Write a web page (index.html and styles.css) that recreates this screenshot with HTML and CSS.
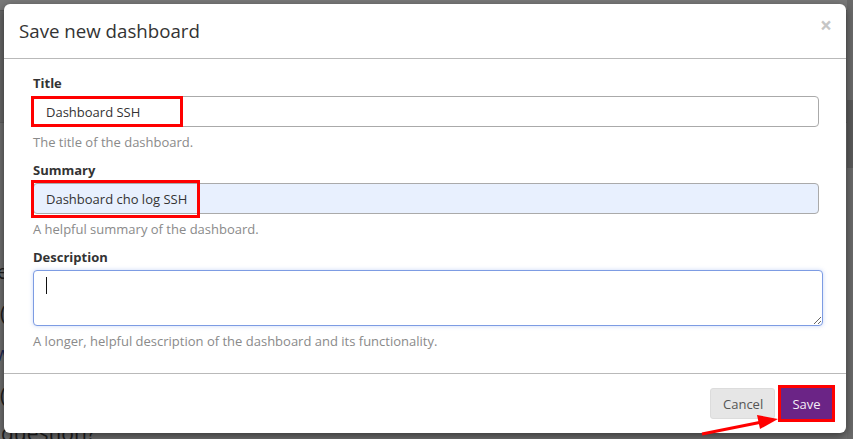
FILE: index.html
```html
<!DOCTYPE html>
<html>
<head>
<meta charset="utf-8">
<link rel="stylesheet" href="styles.css">
</head>
<body>
<div class="page">
  <div class="page-top"></div>
  <div class="page-band"></div>
  <div class="page-text">
    <p class="pline l1">e</p>
    <p class="pline l2">(</p>
    <p class="pline l3">w</p>
    <p class="pline l4">(</p>
    <p class="pline l5">question?</p>
  </div>
  <div class="scrollbar"><div class="thumb"></div></div>
</div>

<div class="modal">
  <div class="modal-header">
    <h4 class="modal-title">Save new dashboard</h4>
    <span class="close">&times;</span>
  </div>
  <div class="modal-body">
    <div class="form-group">
      <label class="label">Title</label>
      <div class="field">
        <input class="input" type="text" value="Dashboard SSH">
        <span class="mark mark-title"></span>
      </div>
      <p class="help">The title of the dashboard.</p>
    </div>
    <div class="form-group">
      <label class="label">Summary</label>
      <div class="field">
        <input class="input input-filled" type="text" value="Dashboard cho log SSH">
        <span class="mark mark-summary"></span>
      </div>
      <p class="help">A helpful summary of the dashboard.</p>
    </div>
    <div class="form-group">
      <label class="label">Description</label>
      <div class="field">
        <textarea class="textarea"></textarea>
        <span class="caret"></span>
      </div>
      <p class="help">A longer, helpful description of the dashboard and its functionality.</p>
    </div>
  </div>
  <div class="modal-footer">
    <button class="btn btn-cancel">Cancel</button>
    <span class="save-mark"><button class="btn btn-save">Save</button></span>
  </div>
</div>

<svg class="arrow" width="853" height="439" viewBox="0 0 853 439">
  <line x1="702" y1="434" x2="762" y2="422" stroke="#ff0000" stroke-width="3"/>
  <polygon points="778,419 757,415 760,429" fill="#ff0000"/>
</svg>
</body>
</html>
```

FILE: styles.css
```css
html, body {
  margin: 0;
  padding: 0;
  width: 853px;
  height: 439px;
  overflow: hidden;
}
body {
  background: #6f6f6f;
  font-family: "Open Sans", "Liberation Sans", sans-serif;
  position: relative;
}
.page {
  width: 853px;
  height: 439px;
}
.page-top {
  height: 10px;
  background: #797979;
  border-bottom: 1px solid #5a5a5a;
}
.page-band {
  height: 111px;
  background: #666666;
  border-bottom: 1px solid #5c5c5c;
}
.page-text {
  padding-top: 128px;
}
.pline {
  margin: 0;
  font-family: "Open Sans", sans-serif;
  font-size: 20px;
  line-height: 41px;
  color: #1e1e1e;
}
.l1 { margin-left: -3px; }
.l3 { color: #1d2a55; margin-left: -5px; }
.l5 { margin-left: 1px; font-size: 21px; line-height: 36px; }
.scrollbar {
  position: absolute;
  right: 0;
  top: 0;
  width: 6px;
  height: 439px;
  background: #6a6a6a;
}
.thumb {
  margin-top: 100px;
  height: 68px;
  background: #5a5a5a;
}

.modal {
  position: absolute;
  left: 4px;
  top: 4px;
  width: 842px;
  height: 429px;
  background: #ffffff;
  border-radius: 6px;
  box-shadow: 0 3px 9px rgba(0, 0, 0, 0.5);
  display: flex;
  flex-direction: column;
  color: #333333;
}
.modal-header {
  height: 55px;
  box-sizing: border-box;
  border-bottom: 1px solid #b9b9b9;
  display: flex;
  align-items: center;
  justify-content: space-between;
  padding: 0 14px 2px 15px;
}
.modal-title {
  margin: 0;
  font-size: 18.7px;
  font-weight: 400;
  color: #333333;
}
.close {
  font-size: 21px;
  font-weight: 700;
  color: #c6c6c6;
  line-height: 1;
  margin-top: -10px;
}
.modal-body {
  padding: 15px 27px 0 29px;
  flex: 1;
}
.form-group {
  margin-bottom: 10px;
}
.label {
  display: block;
  font-size: 13px;
  font-weight: 700;
  line-height: 18px;
  margin-bottom: 4px;
  color: #333333;
}
.field {
  position: relative;
}
.input {
  display: block;
  width: 100%;
  height: 31px;
  box-sizing: border-box;
  border: 1px solid #aaaaaa;
  border-radius: 4px;
  padding: 0 12px;
  font-family: "Open Sans", sans-serif;
  font-size: 13px;
  color: #333333;
  background: #ffffff;
  outline: none;
}
.input-filled {
  background: #e8f0fe;
}
.textarea {
  display: block;
  width: calc(100% + 4px);
  height: 56px;
  box-sizing: border-box;
  border: 1px solid #7d9ce3;
  border-radius: 4px;
  box-shadow: 0 0 4px rgba(102, 140, 233, 0.35);
  padding: 6px 12px;
  font-family: "Open Sans", sans-serif;
  font-size: 13px;
  outline: none;
  resize: both;
  margin: 0;
}
.caret {
  position: absolute;
  left: 13px;
  top: 7px;
  width: 1px;
  height: 17px;
  background: #111111;
}
.mark {
  position: absolute;
  border: 3px solid #ff0000;
  box-sizing: border-box;
}
.mark-title {
  left: -2px;
  top: 0;
  width: 152px;
  height: 31px;
}
.mark-summary {
  left: -2px;
  top: -3px;
  width: 169px;
  height: 38px;
}
.help {
  margin: 6px 0 0 0;
  font-size: 13px;
  line-height: 18px;
  color: #8a8a8a;
}
.modal-footer {
  border-top: 1px solid #b9b9b9;
  padding: 11px 11px 11px 0;
  display: flex;
  justify-content: flex-end;
  align-items: center;
  gap: 3px;
}
.btn {
  font-family: "Open Sans", sans-serif;
  font-size: 13px;
  height: 31px;
  border-radius: 3px;
  padding: 0 12px;
  border: 1px solid transparent;
  box-sizing: border-box;
}
.btn-cancel {
  background: #e6e6e6;
  border-color: #dcdcdc;
  color: #555555;
  width: 65px;
}
.save-mark {
  border: 3px solid #ff0000;
  display: inline-flex;
}
.btn-save {
  background: #6b2486;
  color: #f4eef6;
  border-radius: 0;
  width: 51px;
  padding: 0;
  font-weight: 400;
}
.arrow {
  position: absolute;
  left: 0;
  top: 0;
  pointer-events: none;
}
```
